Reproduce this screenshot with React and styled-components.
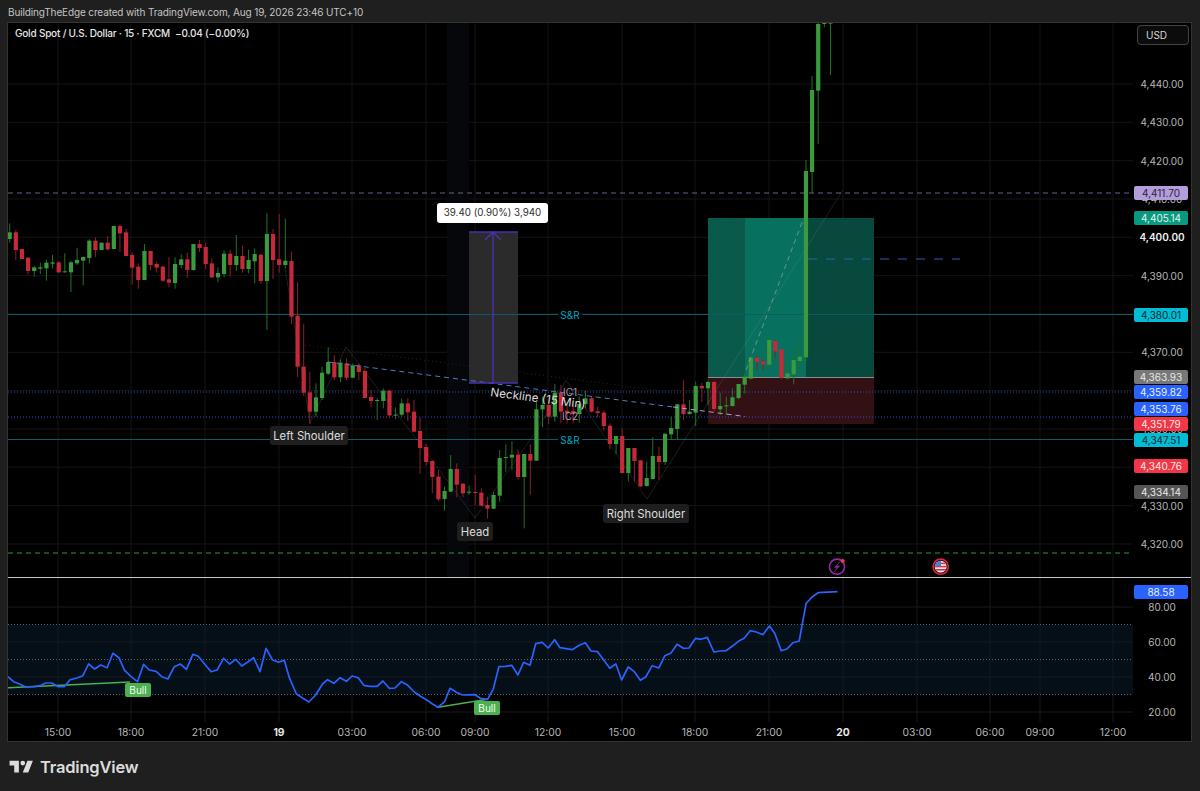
import React from 'react';
import styled, { createGlobalStyle } from 'styled-components';

const GREEN = '#3a9a3d';
const GREEN_WICK = '#1f7426';
const RED = '#c62a3a';
const RED_WICK = '#8c1f2a';

const VERTICALS = [58, 131, 205, 279, 352, 426, 475, 548, 622, 695, 769, 843, 917, 990, 1040, 1113];

const TIME_TICKS = [
  [58, '15:00'], [131, '18:00'], [205, '21:00'], [279, '19', true], [352, '03:00'], [426, '06:00'],
  [475, '09:00'], [548, '12:00'], [622, '15:00'], [695, '18:00'], [769, '21:00'], [843, '20', true],
  [917, '03:00'], [990, '06:00'], [1040, '09:00'], [1113, '12:00'],
];

const priceY = (p) => 84 + (4440 - p) * 3.833;
const rsiY = (v) => 607 + (80 - v) * 1.75;

const GRID_PRICES = [4440, 4430, 4420, 4410, 4400, 4390, 4380, 4370, 4360, 4350, 4340, 4330, 4320];
// 4380, 4360 and 4340 sit fully behind a price tag
const SCALE_PRICES = [4440, 4430, 4420, 4410, 4400, 4390, 4370, 4350, 4330, 4320];

const PRICE_TAGS = [
  { y: 193, text: '4,411.70', bg: '#b39ddb', fg: '#2a2438' },
  { y: 218, text: '4,405.14', bg: '#089981', fg: '#e6f2ef' },
  { y: 315, text: '4,380.01', bg: '#00bcd4', fg: '#10282c' },
  { y: 377, text: '4,363.93', bg: '#787878', fg: '#e8e8e8' },
  { y: 392, text: '4,359.82', bg: '#2962ff', fg: '#e8eeff' },
  { y: 409, text: '4,353.76', bg: '#2962ff', fg: '#e8eeff' },
  { y: 423.5, text: '4,351.79', bg: '#f23645', fg: '#ffecee' },
  { y: 440, text: '4,347.51', bg: '#00bcd4', fg: '#10282c' },
  { y: 466, text: '4,340.76', bg: '#f23645', fg: '#ffecee' },
  { y: 491.5, text: '4,334.14', bg: '#555555', fg: '#e8e8e8' },
];

// candle rows: up?, wick top, body top, body bottom, wick bottom, read off at 3x
const rowsA = [
  [1, 70, 97, 117, 128], [0, 90, 97, 150, 180], [0, 147, 147, 177, 178], [0, 172, 173, 213, 224],
  [1, 198, 202, 213, 230], [1, 188, 202, 206, 222], [1, 180, 188, 205, 242], [1, 165, 187, 191, 206],
  [0, 184, 187, 217, 219], [1, 160, 214, 217, 218], [1, 183, 187, 217, 276], [1, 144, 180, 190, 195],
  [1, 170, 171, 182, 256], [1, 118, 122, 174, 190], [0, 112, 122, 150, 171], [1, 128, 128, 150, 150],
  [0, 108, 128, 148, 152], [1, 77, 78, 147, 147], [0, 73, 78, 100, 156], [0, 86, 97, 168, 168],
  [0, 158, 165, 203, 254], [0, 190, 200, 240, 266], [1, 132, 153, 240, 240], [0, 152, 153, 195, 212],
  [0, 185, 192, 203, 218], [0, 197, 200, 242, 246], [0, 172, 238, 248, 262], [1, 172, 192, 249, 266],
  [1, 163, 178, 195, 205], [0, 158, 178, 210, 234], [1, 132, 132, 210, 212], [0, 120, 132, 144, 156],
  [0, 128, 141, 192, 208], [0, 176, 190, 232, 234], [1, 202, 219, 232, 247], [1, 152, 161, 222, 232],
  [0, 150, 161, 195, 230], [1, 105, 168, 195, 213], [0, 137, 168, 207, 218], [1, 149, 180, 207, 220],
  [1, 145, 162, 184, 250], [0, 162, 164, 243, 252], [1, 40, 102, 243, 390], [0, 87, 102, 180, 237],
  [0, 42, 178, 195, 218], [1, 56, 182, 195, 205], [0, 155, 183, 350, 372], [0, 246, 347, 500, 531],
];
const rowsB = [
  [0, 12, 140, 218, 228], [0, 155, 217, 275, 312], [1, 190, 232, 275, 290], [1, 140, 158, 234, 240],
  [1, 82, 126, 161, 165], [0, 105, 126, 172, 180], [1, 118, 128, 172, 186], [0, 115, 130, 173, 180],
  [1, 130, 136, 173, 175], [0, 130, 136, 156, 180], [0, 145, 153, 234, 234], [0, 210, 231, 243, 262],
  [1, 235, 240, 242, 300], [1, 205, 212, 243, 265], [0, 210, 212, 286, 295], [1, 262, 284, 286, 297],
  [1, 235, 250, 284, 290], [0, 235, 250, 277, 303], [0, 240, 275, 335, 337], [0, 292, 333, 384, 462],
  [0, 372, 381, 426, 437], [0, 420, 423, 471, 520], [0, 450, 470, 538, 543], [1, 500, 513, 537, 572],
  [1, 405, 447, 515, 516], [0, 430, 447, 494, 532], [0, 490, 491, 520, 532], [1, 497, 515, 518, 525],
  [0, 465, 516, 518, 555], [0, 505, 518, 557, 560], [0, 530, 555, 566, 596], [1, 515, 525, 566, 567],
  [1, 390, 414, 527, 545], [1, 373, 411, 413, 455], [1, 364, 404, 413, 450], [0, 388, 404, 471, 478],
  [1, 402, 402, 471, 625], [0, 373, 402, 422, 525], [1, 245, 268, 422, 422], [1, 230, 255, 268, 322],
  [0, 250, 255, 290, 312], [1, 192, 218, 290, 305],
];
const rowsC = [
  [0, 135, 158, 215, 250], [0, 190, 212, 220, 250], [0, 195, 213, 222, 250], [1, 170, 192, 222, 248],
  [1, 152, 175, 192, 205], [0, 170, 175, 215, 218], [0, 200, 214, 219, 232], [0, 212, 218, 258, 272],
  [0, 250, 257, 312, 328], [1, 288, 288, 312, 342], [0, 265, 288, 399, 400], [1, 324, 324, 399, 425],
  [0, 324, 324, 363, 425], [0, 361, 361, 439, 441], [1, 365, 414, 438, 440], [1, 292, 348, 417, 418],
  [0, 320, 348, 366, 420], [1, 281, 281, 366, 375], [1, 230, 264, 283, 300], [1, 192, 193, 267, 298],
  [0, 120, 193, 222, 240], [1, 180, 215, 222, 224], [1, 125, 138, 218, 258], [0, 128, 138, 145, 186],
  [1, 122, 126, 145, 196], [0, 122, 126, 207, 215], [1, 158, 198, 208, 225], [1, 170, 196, 198, 225],
  [1, 145, 172, 198, 200], [1, 132, 132, 174, 178], [1, 100, 110, 134, 160], [1, 53, 53, 116, 118],
  [0, 48, 53, 66, 90], [0, 58, 64, 74, 90], [1, -6, 0, 74, 80], [0, 0, 3, 34, 55],
  [0, 28, 28, 114, 118], [1, 72, 100, 115, 118], [1, 33, 60, 103, 133], [1, 0, 50, 63, 100],
];
const rowsD = [
  [1, 480, 513, 1072, 1085], [1, 228, 270, 516, 580], [1, 66, 72, 272, 432], [1, 66, 66, 72, 82],
  [1, 66, 68, 69, 225],
];

const toCandles = (rows, top) =>
  rows.map(([up, wt, bt, bb, wb]) => ({
    up: !!up,
    wt: top + wt / 3,
    bt: top + bt / 3,
    bb: top + bb / 3,
    wb: top + wb / 3,
  }));

const CANDLES = [
  ...toCandles(rowsA, 200),
  ...toCandles(rowsB, 320),
  ...toCandles(rowsC, 340),
  ...toCandles(rowsD, 0),
].map((c, i) => ({ ...c, x: 9.7 + 6.125 * i }));

const rsiLeft = [
  [22, 290], [38, 305], [55, 312], [72, 321], [95, 320], [112, 317], [128, 309], [145, 309], [163, 320], [180, 320],
  [196, 299], [215, 294], [232, 287], [248, 252], [265, 267], [282, 255], [300, 263], [316, 220], [333, 233], [349, 271],
  [367, 290], [385, 305], [402, 253], [418, 270], [437, 274], [453, 290], [470, 297], [488, 260], [505, 252], [522, 268],
  [540, 223], [555, 229], [573, 252], [591, 275], [608, 270], [626, 235], [643, 252], [660, 238], [677, 258], [695, 245],
  [710, 233], [728, 275], [745, 205], [763, 240], [780, 247], [796, 241], [810, 293], [830, 342], [848, 355], [865, 366],
  [884, 345], [903, 312], [917, 299], [935, 310], [952, 293], [970, 304], [986, 288], [1003, 293], [1019, 316], [1035, 319],
  [1056, 319], [1072, 303], [1090, 325], [1106, 324], [1124, 305], [1140, 314], [1160, 336], [1177, 349], [1195, 360],
  [1210, 371], [1226, 382], [1245, 365], [1260, 325], [1278, 337], [1295, 345], [1330, 344], [1345, 355], [1365, 358],
  [1381, 328], [1397, 260], [1415, 259], [1433, 256], [1450, 285], [1466, 247], [1484, 256], [1500, 191], [1518, 187],
  [1535, 204], [1553, 179],
];
const rsiRight = [
  [0, 203], [30, 209], [47, 196], [62, 188], [76, 213], [92, 215], [107, 240], [122, 265], [137, 252], [151, 300],
  [167, 261], [182, 275], [197, 301], [210, 291], [226, 257], [242, 264], [257, 227], [272, 219], [287, 193], [302, 205],
  [316, 204], [332, 175], [346, 178], [361, 172], [377, 216], [392, 213], [407, 212], [422, 199], [437, 184], [451, 175],
  [466, 152], [481, 156], [497, 164], [513, 138], [526, 160], [542, 212], [556, 207], [571, 188], [586, 183], [603, 70],
  [617, 52], [632, 38], [680, 35],
];
const RSI_POINTS = [
  ...rsiLeft.map(([x, y]) => `${(x / 2.8).toFixed(1)},${(580 + y / 3).toFixed(1)}`),
  ...rsiRight.map(([x, y]) => `${(560 + x / 2.45).toFixed(1)},${(580 + y / 3).toFixed(1)}`),
].join(' ');

function PriceChart() {
  return (
    <ChartSvg viewBox="8 23 1125 554">
      {GRID_PRICES.map((p) => (
        <line key={p} x1="8" x2="1133" y1={priceY(p)} y2={priceY(p)} stroke="#141414" />
      ))}
      {VERTICALS.map((x) => (
        <line key={x} x1={x} x2={x} y1="23" y2="577" stroke="#141414" />
      ))}
      <rect x="447" y="23" width="22" height="554" fill="#06070a" />

      {/* measure tool */}
      <rect x="469" y="232" width="49" height="151" fill="#2b2b2b" />

      {/* long position */}
      <rect x="708" y="218" width="166" height="159" fill="#07493c" />
      <rect x="708" y="218" width="37" height="159" fill="#0a5a4c" />
      <rect x="745" y="218" width="61" height="159" fill="#08705e" />
      <rect x="708" y="378" width="166" height="46" fill="#331014" />
      <line x1="708" x2="874" y1="377.5" y2="377.5" stroke="#8a8f8c" />

      <line x1="8" x2="1133" y1="193" y2="193" stroke="#6a6488" strokeDasharray="5 4" />
      <line x1="8" x2="558" y1="314.5" y2="314.5" stroke="#0e5a66" />
      <line x1="582" x2="1133" y1="314.5" y2="314.5" stroke="#0e5a66" />
      <line x1="8" x2="558" y1="439.5" y2="439.5" stroke="#0e5a66" />
      <line x1="582" x2="1133" y1="439.5" y2="439.5" stroke="#0e5a66" />
      <line x1="8" x2="1133" y1="392" y2="392" stroke="#2a4cd8" strokeDasharray="1 2" />
      <line x1="8" x2="1133" y1="417" y2="417" stroke="#2a4cd8" strokeDasharray="1 2" />
      <line x1="8" x2="1133" y1="553" y2="553" stroke="#2a9a3a" strokeDasharray="5 4" />
      <line x1="808" x2="960" y1="259" y2="259" stroke="#2a60b0" strokeDasharray="9 9" />

      <polyline
        points="285,268 310,423 346,347 417,440 475,518 537,430 566,380 647,499 843,190"
        fill="none"
        stroke="rgba(150, 150, 150, 0.2)"
      />
      <line x1="305" x2="657" y1="345" y2="390" stroke="#242424" strokeDasharray="1 3" />

      {CANDLES.map((c) => (
        <g key={c.x}>
          <line x1={c.x} x2={c.x} y1={c.wt} y2={c.wb} stroke={c.up ? GREEN_WICK : RED_WICK} strokeWidth="1" />
          <rect
            x={c.x - 2.1}
            y={c.bt}
            width="4.2"
            height={Math.max(c.bb - c.bt, 1)}
            fill={c.up ? GREEN : RED}
          />
        </g>
      ))}

      <line x1="328" x2="673" y1="362" y2="407" stroke="#4a7fc4" strokeDasharray="5 4" />
      <line x1="673" x2="745" y1="407" y2="416.5" stroke="#a9a0d8" strokeDasharray="5 4" />
      <line x1="746" x2="803" y1="370" y2="220" stroke="#9ea6a4" strokeOpacity="0.65" strokeDasharray="5 4" />

      <line x1="493" x2="493" y1="232" y2="383" stroke="#4d2fae" strokeWidth="1.5" />
      <line x1="469" x2="518" y1="232" y2="232" stroke="#4d2fae" strokeWidth="1.5" />
      <line x1="469" x2="518" y1="383" y2="383" stroke="#4d2fae" strokeWidth="1.5" />
      <polyline points="485,240 493,232 501,240" fill="none" stroke="#4d2fae" strokeWidth="1.5" />

      <ChartText x="570" y="318.5" textAnchor="middle" fill="#00a5bf">S&amp;R</ChartText>
      <ChartText x="570" y="443.5" textAnchor="middle" fill="#00a5bf">S&amp;R</ChartText>
      <ChartText x="570" y="396" textAnchor="middle" fill="#a89a9a" fontSize="9.5">IC1</ChartText>
      <ChartText x="570" y="420" textAnchor="middle" fill="#a89a9a" fontSize="9.5">IC2</ChartText>
      <NecklineText x="490" y="396" transform="rotate(7.4 490 396)">Neckline (15 Min)</NecklineText>

      <circle cx="837" cy="566.7" r="7.6" fill="none" stroke="#8e2ba8" strokeWidth="1.6" />
      <path
        d="M840 561.6 L834.4 567.6 H837.4 L834 572 L839.8 566 H836.8 Z"
        fill="#8e2ba8"
        stroke="#8e2ba8"
        strokeWidth="0.4"
      />
      <circle cx="842.7" cy="561" r="2" fill="#f23645" />
      <FlagIcon />
    </ChartSvg>
  );
}

function FlagIcon() {
  return (
    <g>
      <clipPath id="flag-clip">
        <circle cx="940.7" cy="566.7" r="6" />
      </clipPath>
      <g clipPath="url(#flag-clip)">
        <rect x="934" y="560" width="14" height="14" fill="#f2f2f2" />
        <rect x="934" y="562.6" width="14" height="1.6" fill="#e0303f" />
        <rect x="934" y="565.8" width="14" height="1.6" fill="#e0303f" />
        <rect x="934" y="569" width="14" height="1.6" fill="#e0303f" />
        <rect x="934" y="572" width="14" height="2" fill="#e0303f" />
        <rect x="934" y="560" width="7" height="6.4" fill="#4a7fd8" />
      </g>
      <circle cx="940.7" cy="566.7" r="7.6" fill="none" stroke="#d8283a" strokeWidth="1.6" />
    </g>
  );
}

function RsiChart() {
  return (
    <ChartSvg viewBox="8 578 1125 144">
      <rect x="8" y={rsiY(70)} width="1125" height={rsiY(30) - rsiY(70)} fill="#050f18" />
      {[80, 60, 40, 20].map((v) => (
        <line key={v} x1="8" x2="1133" y1={rsiY(v)} y2={rsiY(v)} stroke="#161a1e" />
      ))}
      {VERTICALS.map((x) => (
        <line key={x} x1={x} x2={x} y1="578" y2="722" stroke="#14181c" />
      ))}
      {[70, 50, 30].map((v) => (
        <line key={v} x1="8" x2="1133" y1={rsiY(v)} y2={rsiY(v)} stroke="#5c5f63" strokeDasharray="1 2" />
      ))}
      <line x1="8" x2="130" y1="687.7" y2="682" stroke="#4caf50" strokeWidth="1.5" />
      <line x1="438" x2="487.5" y1="707.3" y2="699.3" stroke="#4caf50" strokeWidth="1.5" />
      <polyline points={RSI_POINTS} fill="none" stroke="#2962ff" strokeWidth="1.7" strokeLinejoin="round" />
    </ChartSvg>
  );
}

export default function App() {
  return (
    <>
      <GlobalStyle />
      <Page>
        <Header>BuildingTheEdge created with TradingView.com, Aug 19, 2026 23:46 UTC+10</Header>
        <Frame>
          <PriceRow>
            <Pane>
              <PriceChart />
              <Legend>Gold Spot / U.S. Dollar · 15 · FXCM&nbsp; −0.04 (−0.00%)</Legend>
              <MeasureTag>39.40 (0.90%) 3,940</MeasureTag>
              <NoteChip $x={270} $y={426} $w={78}>Left Shoulder</NoteChip>
              <NoteChip $x={457} $y={522} $w={36}>Head</NoteChip>
              <NoteChip $x={603} $y={504} $w={86}>Right Shoulder</NoteChip>
            </Pane>
            <Scale>
              <CurrencyButton>USD</CurrencyButton>
              {SCALE_PRICES.map((p) => (
                <ScaleTick key={p} $top={priceY(p) - 23} $strong={p === 4400}>
                  {p.toLocaleString('en-US')}.00
                </ScaleTick>
              ))}
              {PRICE_TAGS.map((t) => (
                <PriceTag key={t.text} $top={t.y - 23} $bg={t.bg} $fg={t.fg}>
                  {t.text}
                </PriceTag>
              ))}
            </Scale>
          </PriceRow>
          <RsiRow>
            <Pane>
              <RsiChart />
              <BullTag $x={125} $y={683 - 578}>Bull</BullTag>
              <BullTag $x={474} $y={701 - 578}>Bull</BullTag>
            </Pane>
            <Scale>
              {[80, 60, 40, 20].map((v) => (
                <ScaleTick key={v} $top={rsiY(v) - 578}>{v}.00</ScaleTick>
              ))}
              <PriceTag $top={592 - 578} $bg="#2962ff" $fg="#e8eeff">88.58</PriceTag>
            </Scale>
          </RsiRow>
          <TimeAxis>
            {TIME_TICKS.map(([x, label, strong]) => (
              <TimeTick key={`${x}`} $x={x - 8} $strong={strong}>{label}</TimeTick>
            ))}
          </TimeAxis>
        </Frame>
        <Footer>
          <svg width="28" height="22" viewBox="0 0 36 28" fill="#dcdcdc">
            <path d="M14 6H2v6h6v9h6V6Zm12 15h-7l6-15h7l-6 15Zm-7-9a3 3 0 1 0 0-6 3 3 0 0 0 0 6Z" />
          </svg>
          <Brand>TradingView</Brand>
        </Footer>
      </Page>
    </>
  );
}

const GlobalStyle = createGlobalStyle`
  html, body {
    margin: 0;
    padding: 0;
    background: #1f1f1f;
  }
  body {
    font-family: Inter, "Liberation Sans", sans-serif;
  }
`;

const Page = styled.div`
  width: 1200px;
  height: 791px;
  background: #1f1f1f;
  display: flex;
  flex-direction: column;
  overflow: hidden;
`;

const Header = styled.div`
  height: 22px;
  line-height: 25px;
  padding-left: 8px;
  font-size: 10px;
  letter-spacing: -0.135px;
  color: #c4c4c4;
  white-space: nowrap;
`;

const Frame = styled.div`
  width: 1183px;
  height: 718px;
  margin-left: 7px;
  border: 1px solid #333;
  background: #000;
  display: flex;
  flex-direction: column;
`;

const PriceRow = styled.div`
  height: 554px;
  display: flex;
`;

const RsiRow = styled.div`
  height: 144px;
  border-top: 1px solid #c8c8c8;
  display: flex;
`;

const Pane = styled.div`
  position: relative;
  width: 1125px;
  height: 100%;
  overflow: hidden;
`;

const ChartSvg = styled.svg`
  display: block;
  width: 100%;
  height: 100%;
`;

const ChartText = styled.text`
  font-family: Inter, "Liberation Sans", sans-serif;
  font-size: 10px;
`;

const NecklineText = styled.text`
  font-family: Inter, "Liberation Sans", sans-serif;
  font-size: 11.75px;
  fill: #dcdcdc;
`;

const Legend = styled.div`
  position: absolute;
  left: 7px;
  top: 4px;
  font-size: 10px;
  letter-spacing: -0.2px;
  line-height: 13px;
  font-weight: 500;
  color: #e6e6e6;
  white-space: nowrap;
`;

const MeasureTag = styled.div`
  position: absolute;
  left: 429px;
  top: 180px;
  width: 111px;
  height: 20px;
  line-height: 20px;
  border-radius: 3px;
  background: #fff;
  color: #2e2e2e;
  font-size: 9.8px;
  text-align: center;
  white-space: nowrap;
`;

const NoteChip = styled.div`
  position: absolute;
  left: ${({ $x }) => $x - 8}px;
  top: ${({ $y }) => $y - 23}px;
  width: ${({ $w }) => $w}px;
  height: 19px;
  line-height: 20px;
  border-radius: 3px;
  background: #1e1e1e;
  color: #dedede;
  font-size: 11.3px;
  text-align: center;
  white-space: nowrap;
`;

const BullTag = styled.div`
  position: absolute;
  left: ${({ $x }) => $x - 8}px;
  top: ${({ $y }) => $y}px;
  width: 26px;
  height: 14px;
  line-height: 14px;
  border-radius: 2px;
  background: #4caf50;
  color: #f2fff2;
  font-size: 10px;
  text-align: center;
`;

const Scale = styled.div`
  position: relative;
  width: 58px;
  height: 100%;
  overflow: hidden;
  background: #000;
`;

const CurrencyButton = styled.div`
  position: absolute;
  left: 4px;
  top: 2px;
  width: 52px;
  height: 20px;
  box-sizing: border-box;
  padding-left: 8px;
  line-height: 18px;
  border: 1px solid #444;
  border-radius: 4px;
  background: #0c0c0c;
  color: #d8d8d8;
  font-size: 10px;
`;

const ScaleTick = styled.div`
  position: absolute;
  left: 0;
  right: 0;
  top: ${({ $top }) => $top - 7}px;
  height: 14px;
  line-height: 14px;
  text-align: center;
  font-size: 10px;
  font-weight: ${({ $strong }) => ($strong ? 600 : 400)};
  color: ${({ $strong }) => ($strong ? '#f0f0f0' : '#b6b6b6')};
  white-space: nowrap;
`;

const PriceTag = styled.div`
  position: absolute;
  left: 1px;
  width: 54px;
  top: ${({ $top }) => $top - 7}px;
  height: 14px;
  line-height: 14px;
  border-radius: 2px;
  background: ${({ $bg }) => $bg};
  color: ${({ $fg }) => $fg};
  font-size: 10px;
  text-align: center;
  white-space: nowrap;
`;

const TimeAxis = styled.div`
  position: relative;
  height: 19px;
`;

const TimeTick = styled.div`
  position: absolute;
  left: ${({ $x }) => $x}px;
  top: 0;
  transform: translateX(-50%);
  line-height: 20px;
  font-size: 10.3px;
  font-weight: ${({ $strong }) => ($strong ? 700 : 400)};
  color: ${({ $strong }) => ($strong ? '#e8e8e8' : '#b6b6b6')};
  white-space: nowrap;
`;

const Footer = styled.div`
  display: flex;
  align-items: center;
  gap: 4px;
  height: 49px;
  padding-left: 8px;
`;

const Brand = styled.span`
  font-size: 16.5px;
  font-weight: 600;
  letter-spacing: -0.2px;
  color: #dcdcdc;
`;
